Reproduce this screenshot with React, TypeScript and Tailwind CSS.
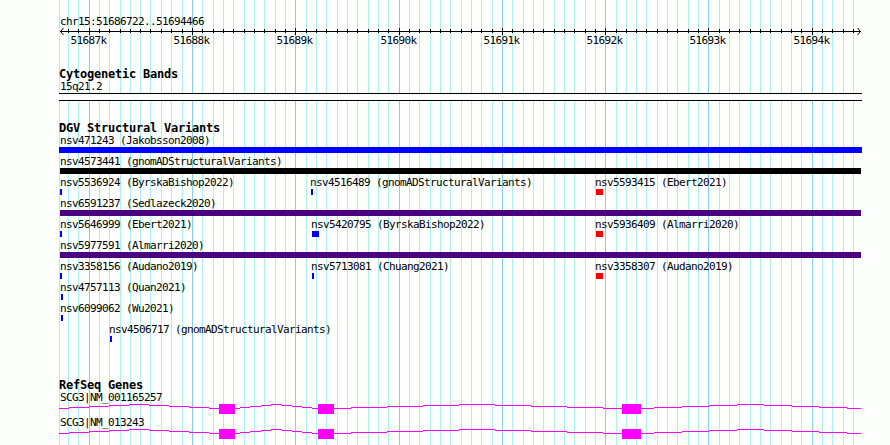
import React from 'react';

interface Feature {
    name: string;
    // horizontal space taken before the next feature starts
    cell?: string;
    // glyph geometry and colour
    glyph: string;
    offset?: string;
}

const MAJOR = [89, 192, 295, 399, 502, 605, 708, 812];

const MINOR = [
    59, 68, 78, 99, 109, 120, 130, 140, 150, 161, 171, 182, 202, 213, 223, 233, 244, 254, 264, 275, 285,
    306, 316, 326, 337, 347, 357, 368, 378, 388, 409, 419, 430, 440, 450, 461, 471, 481, 492,
    512, 523, 533, 543, 554, 564, 574, 585, 595, 616, 626, 636, 646, 657, 667, 677, 688, 698,
    719, 729, 739, 750, 760, 770, 781, 791, 801, 822, 832, 843, 853,
];

const WIDE = 'ml-0 w-[801px]';
const TICK = 'ml-0 w-[2px] bg-[#0000ff]';

const VARIANTS: Feature[][] = [
    [{ name: 'nsv471243 (Jakobsson2008)', glyph: '-ml-px w-[803px] bg-[#0000ff]' }],
    [{ name: 'nsv4573441 (gnomADStructuralVariants)', glyph: `${WIDE} bg-black` }],
    [
        { name: 'nsv5536924 (ByrskaBishop2022)', cell: 'w-[250px]', glyph: TICK },
        { name: 'nsv4516489 (gnomADStructuralVariants)', cell: 'w-[285px]', glyph: 'ml-px w-[2px] bg-[#0000ff]' },
        { name: 'nsv5593415 (Ebert2021)', glyph: 'ml-px w-[7px] bg-[#ff0000]' },
    ],
    [{ name: 'nsv6591237 (Sedlazeck2020)', glyph: `${WIDE} bg-[#4b0082]` }],
    [
        { name: 'nsv5646999 (Ebert2021)', cell: 'w-[251px]', glyph: TICK },
        { name: 'nsv5420795 (ByrskaBishop2022)', cell: 'w-[284px]', glyph: 'ml-px w-[7px] bg-[#0000ff]' },
        { name: 'nsv5936409 (Almarri2020)', glyph: 'ml-px w-[7px] bg-[#ff0000]' },
    ],
    [{ name: 'nsv5977591 (Almarri2020)', glyph: `${WIDE} bg-[#4b0082]` }],
    [
        { name: 'nsv3358156 (Audano2019)', cell: 'w-[251px]', glyph: TICK },
        { name: 'nsv5713081 (Chuang2021)', cell: 'w-[284px]', glyph: 'ml-px w-[2px] bg-[#0000ff]' },
        { name: 'nsv3358307 (Audano2019)', glyph: 'ml-px w-[7px] bg-[#ff0000]' },
    ],
    [{ name: 'nsv4757113 (Quan2021)', glyph: 'ml-px w-[2px] bg-[#0000ff]' }],
    [{ name: 'nsv6099062 (Wu2021)', glyph: 'ml-px w-[2px] bg-[#0000ff]' }],
    [{ name: 'nsv4506717 (gnomADStructuralVariants)', offset: 'ml-[49px]', glyph: 'ml-px w-[2px] bg-[#0000ff]' }],
];

// intron line: [start, end, height above the base line]
const INTRONS = [
    [59, 69, 0], [69, 89, 1], [89, 109, 2], [109, 129, 3], [129, 149, 4], [149, 169, 3], [169, 189, 2], [189, 209, 1], [209, 219, 0],
    [235, 240, 0], [240, 250, 1], [250, 261, 2], [261, 271, 3], [271, 282, 4], [282, 292, 3], [292, 302, 2], [302, 312, 1], [312, 318, 0],
    [334, 351, 0], [351, 387, 1], [387, 423, 2], [423, 459, 3], [459, 495, 4], [495, 531, 3], [531, 567, 2], [567, 603, 1], [603, 622, 0],
    [641, 654, 0], [654, 682, 1], [682, 709, 2], [709, 737, 3], [737, 764, 4], [764, 792, 3], [792, 819, 2], [819, 847, 1], [847, 861, 0],
];

const EXONS = [[219, 16], [318, 16], [622, 19]];

const Grid: React.FC = () => (
    <svg className="absolute inset-0 -z-10" width="890" height="445" shapeRendering="crispEdges">
        {MINOR.map((x) => <rect key={x} x={x} y="0" width="1" height="445" fill="#afeeee" />)}
        {MAJOR.map((x) => <rect key={x} x={x} y="0" width="1" height="445" fill="#87ceeb" />)}
    </svg>
);

const Label: React.FC<{ children: React.ReactNode }> = ({ children }) => (
    <div className="h-[15px] whitespace-nowrap text-[11px] leading-[18px] tracking-[-0.622px]">{children}</div>
);

const Heading: React.FC<{ children: React.ReactNode }> = ({ children }) => (
    <h2 className="-ml-px h-3 whitespace-nowrap text-[12px] font-bold leading-[17px] tracking-[-0.224px]">{children}</h2>
);

const Ruler: React.FC = () => (
    <svg className="-ml-px block" width="803" height="20" viewBox="59 28 803 20">
        <g shapeRendering="crispEdges">
            <rect x="60" y="31" width="801" height="1" />
            {MINOR.slice(1).map((x) => <rect key={x} x={x} y="29" width="1" height="4" />)}
            {MAJOR.map((x) => <rect key={x} x={x} y="28" width="1" height="7" />)}
        </g>
        <path d="M63.5 28L60.5 31.5L63.5 35M857.5 28L860.5 31.5L857.5 35" fill="none" stroke="black" />
        {MAJOR.map((x, i) => (
            <text key={x} x={x - 18.5} y="44" className="text-[11px] tracking-[-0.622px]">{`${51687 + i}k`}</text>
        ))}
    </svg>
);

const Gene: React.FC<{ name: string }> = ({ name }) => (
    <div>
        <Label>{name}</Label>
        <svg className="-ml-px block" width="803" height="10" viewBox="59 0 803 10" shapeRendering="crispEdges" fill="#ff00ff">
            {INTRONS.map(([start, end, rise]) => (
                <rect key={start} x={start} y={4 - rise} width={end - start} height="1" />
            ))}
            {EXONS.map(([x, width]) => <rect key={x} x={x} y="0" width={width} height="10" />)}
        </svg>
    </div>
);

const App: React.FC = () => {
    return (
        <div className="relative isolate h-[445px] w-[890px] overflow-hidden bg-[#fdfffc] pl-[60px] pt-[13px] font-['DejaVu_Sans_Mono',monospace] text-black">
            <Grid />
            <Label>chr15:51686722..51694466</Label>
            <Ruler />

            <section className="mt-[18px]">
                <Heading>Cytogenetic Bands</Heading>
                <Label>15q21.2</Label>
                <div className="-ml-px h-2 w-[803px] border-y border-black bg-[#fdfffc]" />
            </section>

            <section className="mt-[19px]">
                <Heading>DGV Structural Variants</Heading>
                {VARIANTS.map((row) => (
                    <div key={row[0].name} className="flex">
                        {row.map(({ name, cell, glyph, offset }) => (
                            <div key={name} className={`shrink-0 ${cell ?? ''} ${offset ?? ''}`}>
                                <Label>{name}</Label>
                                <div className={`h-1.5 ${glyph}`} />
                            </div>
                        ))}
                    </div>
                ))}
            </section>

            <section className="mt-[35px]">
                <Heading>RefSeq Genes</Heading>
                <Gene name="SCG3|NM_001165257" />
                <Gene name="SCG3|NM_013243" />
            </section>
        </div>
    );
};

export default App;
